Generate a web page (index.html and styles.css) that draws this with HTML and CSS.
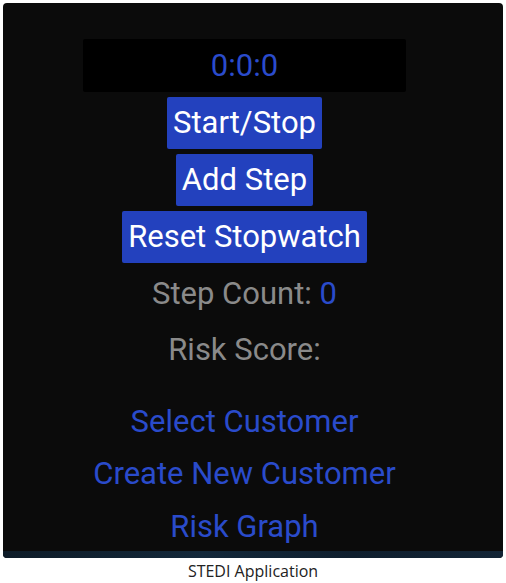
FILE: index.html
```
<!DOCTYPE html>
<html>
<head>
<meta charset="utf-8">
<link rel="stylesheet" href="styles.css">
</head>
<body>
<div class="card">
  <div class="timer">0:0:0</div>
  <div class="buttons">
    <button class="btn">Start/Stop</button>
    <button class="btn">Add Step</button>
    <button class="btn">Reset Stopwatch</button>
  </div>
  <div class="stat first">Step Count: <span class="num">0</span></div>
  <div class="stat">Risk Score:</div>
  <div class="links">
    <a class="link">Select Customer</a>
    <a class="link">Create New Customer</a>
    <a class="link">Risk Graph</a>
  </div>
  <div class="strip"></div>
</div>
<div class="caption">STEDI Application</div>
</body>
</html>
```
FILE: styles.css
```
html, body { margin: 0; padding: 0; background: #fff; }
body { width: 506px; height: 583px; overflow: hidden; font-family: Roboto, "Liberation Sans", sans-serif; }
.card {
  margin: 3px 3px 0 3px;
  width: 500px;
  height: 555px;
  box-sizing: border-box;
  padding-right: 17px;
  background: #0b0b0b;
  border-radius: 4px;
  overflow: hidden;
  display: flex;
  flex-direction: column;
  align-items: center;
  position: relative;
}
.timer {
  margin-top: 36px;
  width: 323px;
  height: 53px;
  background: #000;
  border-radius: 2px;
  color: #2a4bcb;
  font-size: 31px;
  line-height: 53px;
  text-align: center;
}
.buttons { display: flex; flex-direction: column; align-items: center; gap: 5px; margin-top: 5px; }
.btn {
  font-family: Roboto, "Liberation Sans", sans-serif;
  background: #2341be;
  color: #fff;
  border: none;
  border-radius: 2px;
  height: 52px;
  padding: 0 6px;
  font-size: 31px;
  line-height: 52px;
}
.stat { color: #8a8a8a; font-size: 31px; height: 52px; line-height: 52px; margin-top: 4px; }
.stat.first { margin-top: 5px; }
.num { color: #2a4bcb; }
.links { display: flex; flex-direction: column; align-items: center; margin-top: 20px; }
.link { color: #2a4bcb; font-size: 31px; height: 52px; line-height: 52px; }
.link:nth-child(2) { height: 53px; }
.strip {
  position: absolute; left: 0; right: 0; bottom: 0; height: 7px;
  background: linear-gradient(90deg, #0e1c28, #13283a 40%, #0f1f2e 70%, #132536);
}
.caption {
  text-align: center;
  font-family: "Open Sans", sans-serif;
  font-size: 16px;
  color: #222;
  line-height: 26px;
}
```
